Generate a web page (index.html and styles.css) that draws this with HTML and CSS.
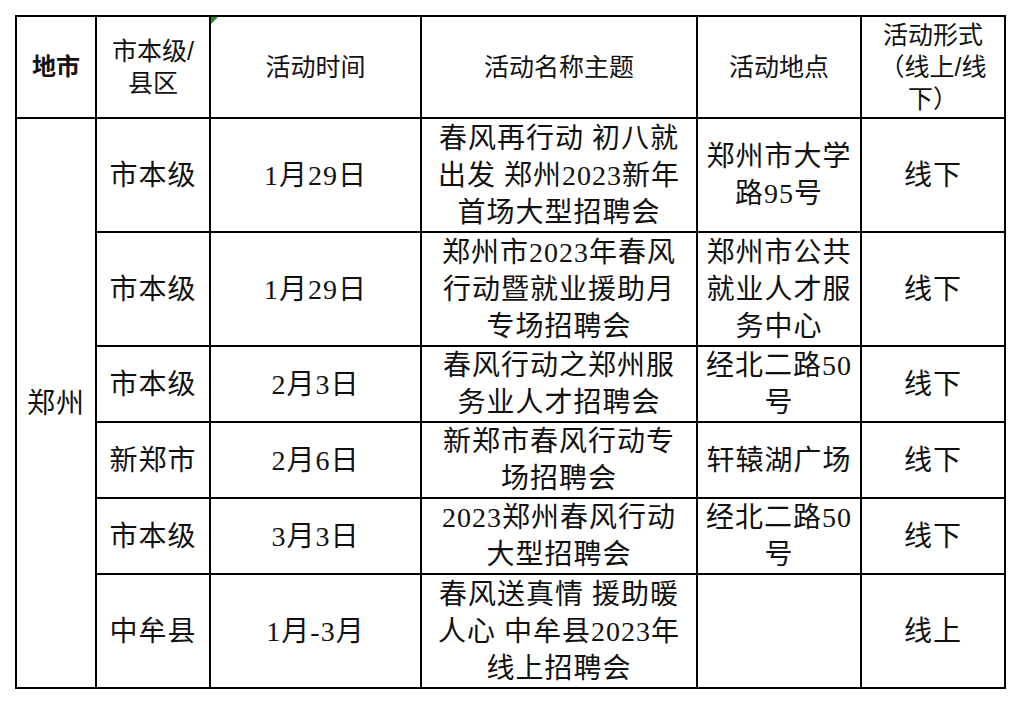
FILE: index.html
```html
<!DOCTYPE html>
<html lang="zh-CN">
<head>
<meta charset="utf-8">
<title>春风行动招聘会</title>
<link rel="stylesheet" href="styles.css">
</head>
<body>
<div class="page">
  <table class="sheet">
    <colgroup>
      <col class="c-city">
      <col class="c-level">
      <col class="c-time">
      <col class="c-name">
      <col class="c-place">
      <col class="c-form">
    </colgroup>
    <thead>
      <tr class="head">
        <th class="strong">地市</th>
        <th>市本级/<br>县区</th>
        <th class="flagged">活动时间<span class="tri"></span></th>
        <th>活动名称主题</th>
        <th>活动地点</th>
        <th>活动形式<br>（线上/线<br>下）</th>
      </tr>
    </thead>
    <tbody>
      <tr class="tall">
        <td rowspan="6" class="city">郑州</td>
        <td>市本级</td>
        <td>1月29日</td>
        <td>春风再行动 初八就<br>出发 郑州2023新年<br>首场大型招聘会</td>
        <td>郑州市大学<br>路95号</td>
        <td>线下</td>
      </tr>
      <tr class="tall">
        <td>市本级</td>
        <td>1月29日</td>
        <td>郑州市2023年春风<br>行动暨就业援助月<br>专场招聘会</td>
        <td>郑州市公共<br>就业人才服<br>务中心</td>
        <td>线下</td>
      </tr>
      <tr class="short">
        <td>市本级</td>
        <td>2月3日</td>
        <td>春风行动之郑州服<br>务业人才招聘会</td>
        <td>经北二路50<br>号</td>
        <td>线下</td>
      </tr>
      <tr class="short">
        <td>新郑市</td>
        <td>2月6日</td>
        <td>新郑市春风行动专<br>场招聘会</td>
        <td>轩辕湖广场</td>
        <td>线下</td>
      </tr>
      <tr class="short">
        <td>市本级</td>
        <td>3月3日</td>
        <td>2023郑州春风行动<br>大型招聘会</td>
        <td>经北二路50<br>号</td>
        <td>线下</td>
      </tr>
      <tr class="tall">
        <td>中牟县</td>
        <td>1月-3月</td>
        <td>春风送真情 援助暖<br>人心 中牟县2023年<br>线上招聘会</td>
        <td></td>
        <td>线上</td>
      </tr>
    </tbody>
  </table>
</div>
</body>
</html>
```

FILE: styles.css
```css
html, body {
  margin: 0;
  padding: 0;
  background: #ffffff;
}

.page {
  padding: 15px 0 0 15px;
}

.sheet {
  border-collapse: collapse;
  table-layout: fixed;
  width: 991px;
  color: #111111;
}

.c-city { width: 80px; }
.c-level { width: 114px; }
.c-time { width: 211px; }
.c-name { width: 276px; }
.c-place { width: 164px; }
.c-form { width: 144px; }

.sheet th,
.sheet td {
  border: 2px solid #000000;
  padding: 0;
  text-align: center;
  vertical-align: middle;
  white-space: nowrap;
  overflow: hidden;
}

.sheet th {
  font-family: "Liberation Sans", "Noto Sans CJK SC", sans-serif;
  font-weight: 400;
  font-size: 25px;
  line-height: 32px;
}

.sheet th.strong {
  font-weight: 700;
  font-size: 24px;
}

.sheet td {
  font-family: "Liberation Serif", "Noto Sans CJK SC", serif;
  font-size: 28px;
  line-height: 37px;
  letter-spacing: 1px;
}

.head { height: 102px; }
.tall { height: 114px; }
.short { height: 76px; }

.flagged {
  position: relative;
}

.tri {
  position: absolute;
  left: 0;
  top: 0;
  width: 0;
  height: 0;
  border-top: 7px solid #1e8f2e;
  border-right: 7px solid transparent;
}
```
